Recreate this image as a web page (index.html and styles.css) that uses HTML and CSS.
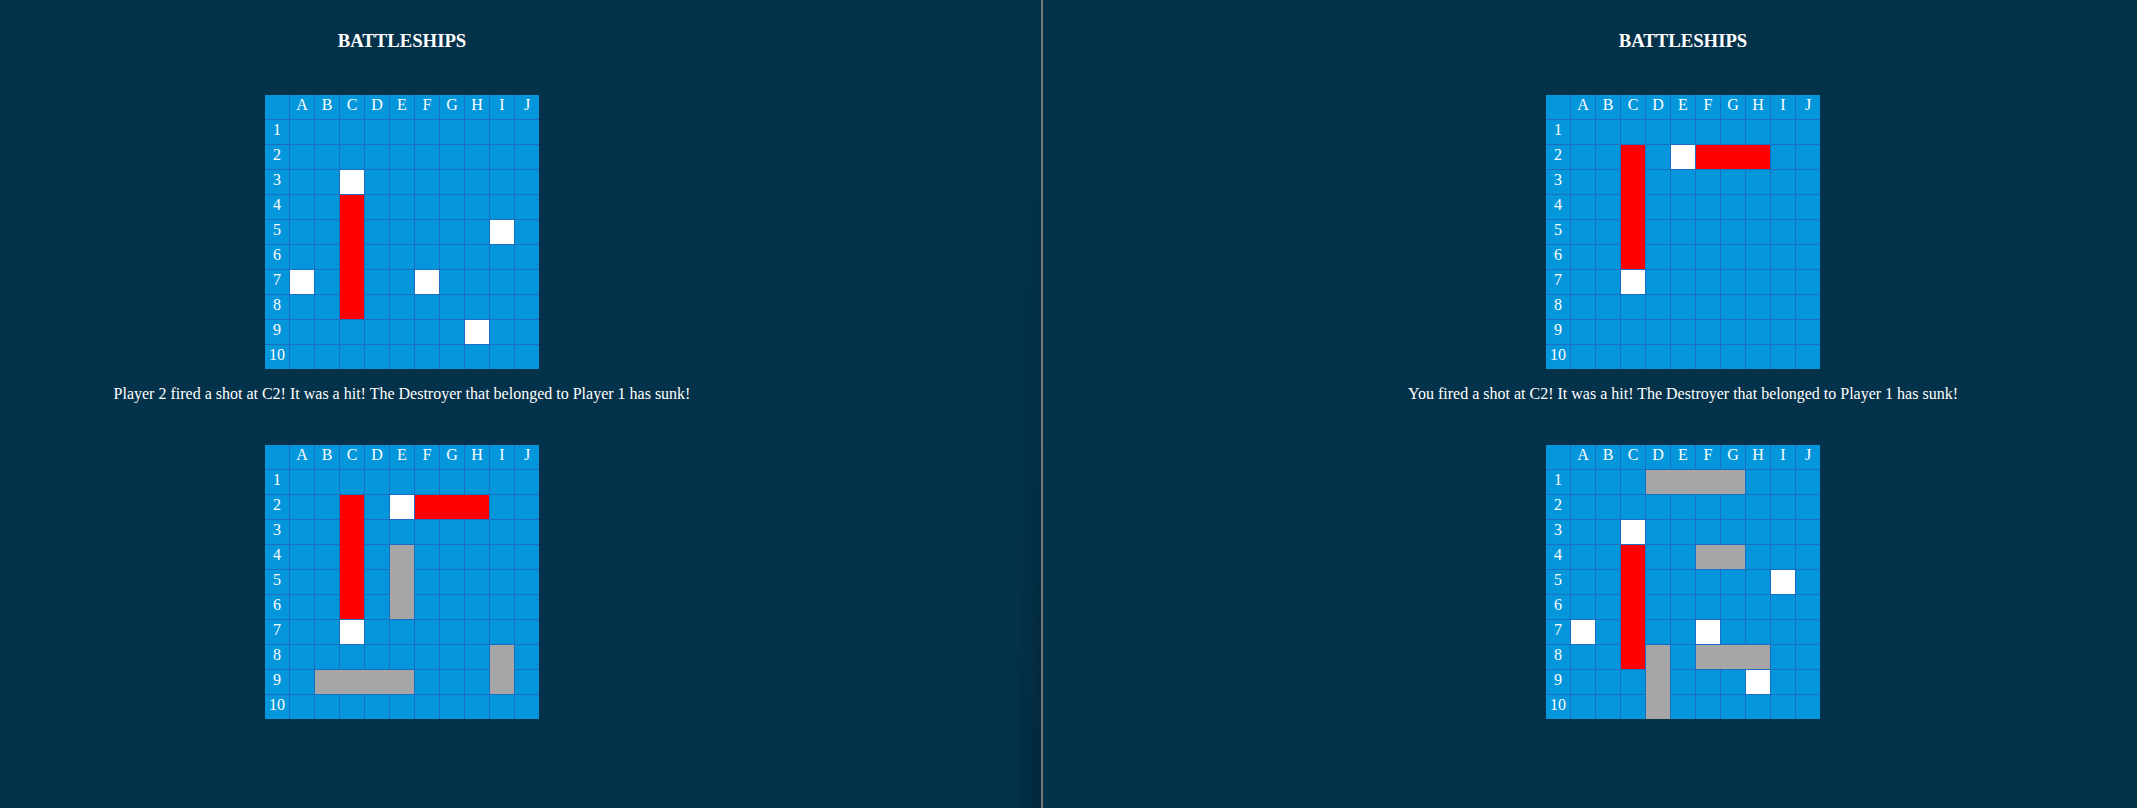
FILE: index.html
```html
<!DOCTYPE html>
<html lang="en">
<head>
<meta charset="utf-8">
<title>Battleships</title>
<link rel="stylesheet" href="styles.css">
</head>
<body>
<div class="app">
  <section class="pane pane-left">
    <div class="board-col">
      <h3 class="title">BATTLESHIPS</h3>
      <div class="grid">
        <div class="lbl"></div><div class="lbl">A</div><div class="lbl">B</div><div class="lbl">C</div><div class="lbl">D</div><div class="lbl">E</div><div class="lbl">F</div><div class="lbl">G</div><div class="lbl">H</div><div class="lbl">I</div><div class="lbl">J</div>
        <div class="lbl row">1</div><div class="lbl row">2</div><div class="lbl row">3</div><div class="lbl row">4</div><div class="lbl row">5</div><div class="lbl row">6</div><div class="lbl row">7</div><div class="lbl row">8</div><div class="lbl row">9</div><div class="lbl row">10</div>
        <div class="miss" style="grid-area: 4 / 4"></div>
        <div class="hit" style="grid-area: 5 / 4 / span 5 / span 1"></div>
        <div class="miss" style="grid-area: 6 / 10"></div>
        <div class="miss" style="grid-area: 8 / 2"></div>
        <div class="miss" style="grid-area: 8 / 7"></div>
        <div class="miss" style="grid-area: 10 / 9"></div>
      </div>
      <p class="message">Player 2 fired a shot at C2! It was a hit! The Destroyer that belonged to Player 1 has sunk!</p>
      <div class="grid">
        <div class="lbl"></div><div class="lbl">A</div><div class="lbl">B</div><div class="lbl">C</div><div class="lbl">D</div><div class="lbl">E</div><div class="lbl">F</div><div class="lbl">G</div><div class="lbl">H</div><div class="lbl">I</div><div class="lbl">J</div>
        <div class="lbl row">1</div><div class="lbl row">2</div><div class="lbl row">3</div><div class="lbl row">4</div><div class="lbl row">5</div><div class="lbl row">6</div><div class="lbl row">7</div><div class="lbl row">8</div><div class="lbl row">9</div><div class="lbl row">10</div>
        <div class="hit" style="grid-area: 3 / 4 / span 5 / span 1"></div>
        <div class="miss" style="grid-area: 3 / 6"></div>
        <div class="hit" style="grid-area: 3 / 7 / span 1 / span 3"></div>
        <div class="ship" style="grid-area: 5 / 6 / span 3 / span 1"></div>
        <div class="miss" style="grid-area: 8 / 4"></div>
        <div class="ship" style="grid-area: 9 / 10 / span 2 / span 1"></div>
        <div class="ship" style="grid-area: 10 / 3 / span 1 / span 4"></div>
      </div>
    </div>
  </section>
  <div class="divider"></div>
  <section class="pane pane-right">
    <div class="board-col">
      <h3 class="title">BATTLESHIPS</h3>
      <div class="grid">
        <div class="lbl"></div><div class="lbl">A</div><div class="lbl">B</div><div class="lbl">C</div><div class="lbl">D</div><div class="lbl">E</div><div class="lbl">F</div><div class="lbl">G</div><div class="lbl">H</div><div class="lbl">I</div><div class="lbl">J</div>
        <div class="lbl row">1</div><div class="lbl row">2</div><div class="lbl row">3</div><div class="lbl row">4</div><div class="lbl row">5</div><div class="lbl row">6</div><div class="lbl row">7</div><div class="lbl row">8</div><div class="lbl row">9</div><div class="lbl row">10</div>
        <div class="hit" style="grid-area: 3 / 4 / span 5 / span 1"></div>
        <div class="miss" style="grid-area: 3 / 6"></div>
        <div class="hit" style="grid-area: 3 / 7 / span 1 / span 3"></div>
        <div class="miss" style="grid-area: 8 / 4"></div>
      </div>
      <p class="message">You fired a shot at C2! It was a hit! The Destroyer that belonged to Player 1 has sunk!</p>
      <div class="grid">
        <div class="lbl"></div><div class="lbl">A</div><div class="lbl">B</div><div class="lbl">C</div><div class="lbl">D</div><div class="lbl">E</div><div class="lbl">F</div><div class="lbl">G</div><div class="lbl">H</div><div class="lbl">I</div><div class="lbl">J</div>
        <div class="lbl row">1</div><div class="lbl row">2</div><div class="lbl row">3</div><div class="lbl row">4</div><div class="lbl row">5</div><div class="lbl row">6</div><div class="lbl row">7</div><div class="lbl row">8</div><div class="lbl row">9</div><div class="lbl row">10</div>
        <div class="ship" style="grid-area: 2 / 5 / span 1 / span 4"></div>
        <div class="miss" style="grid-area: 4 / 4"></div>
        <div class="hit" style="grid-area: 5 / 4 / span 5 / span 1"></div>
        <div class="ship" style="grid-area: 5 / 7 / span 1 / span 2"></div>
        <div class="miss" style="grid-area: 6 / 10"></div>
        <div class="miss" style="grid-area: 8 / 2"></div>
        <div class="miss" style="grid-area: 8 / 7"></div>
        <div class="ship" style="grid-area: 9 / 5 / span 3 / span 1"></div>
        <div class="ship" style="grid-area: 9 / 7 / span 1 / span 3"></div>
        <div class="miss" style="grid-area: 10 / 9"></div>
      </div>
    </div>
  </section>
</div>
</body>
</html>
```

FILE: styles.css
```css
html, body {
  margin: 0;
  padding: 0;
  background: #03324a;
}

body {
  font-family: "Liberation Serif", "Times New Roman", serif;
  color: #ffffff;
  font-size: 16px;
}

.app {
  display: flex;
  height: 808px;
  overflow: hidden;
}

.pane {
  position: relative;
  background: #03324a;
}

.pane-left {
  width: 1041px;
  flex: none;
}

.pane-left::after {
  content: "";
  position: absolute;
  top: 0;
  right: 0;
  bottom: 0;
  width: 26px;
  background: linear-gradient(to right, rgba(0, 0, 0, 0), rgba(0, 0, 0, 0.2));
  -webkit-mask-image: linear-gradient(to bottom, transparent 10%, #000 100%);
  mask-image: linear-gradient(to bottom, transparent 10%, #000 100%);
}

.pane-right {
  flex: 1;
  padding-left: 238px;
}

.divider {
  width: 2px;
  flex: none;
  background: #787878;
}

.board-col {
  width: 804px;
  display: flex;
  flex-direction: column;
  align-items: center;
  padding-top: 30px;
}

.title {
  margin: 0;
  font-size: 18.72px;
  line-height: 22px;
  font-weight: bold;
}

.grid {
  display: grid;
  grid-template-columns: repeat(11, 24px);
  grid-template-rows: repeat(11, 24px);
  gap: 1px;
  width: 274px;
  height: 274px;
  margin-top: 43px;
  background-color: #0396db;
  background-image:
    repeating-linear-gradient(to right, transparent 0 24px, #1d6dc3 24px 25px),
    repeating-linear-gradient(to bottom, transparent 0 24px, #1d6dc3 24px 25px);
}

.message + .grid {
  margin-top: 42px;
}

.lbl {
  padding-top: 1px;
  line-height: 18px;
  font-size: 16px;
  text-align: center;
  color: #ffffff;
}

.lbl.row {
  grid-column: 1;
}

.miss {
  background: #ffffff;
}

.hit {
  background: #ff0000;
}

.ship {
  background: #a6a6a6;
}

.message {
  margin: 16px 0 0;
  line-height: 18px;
  font-size: 16px;
}
```
